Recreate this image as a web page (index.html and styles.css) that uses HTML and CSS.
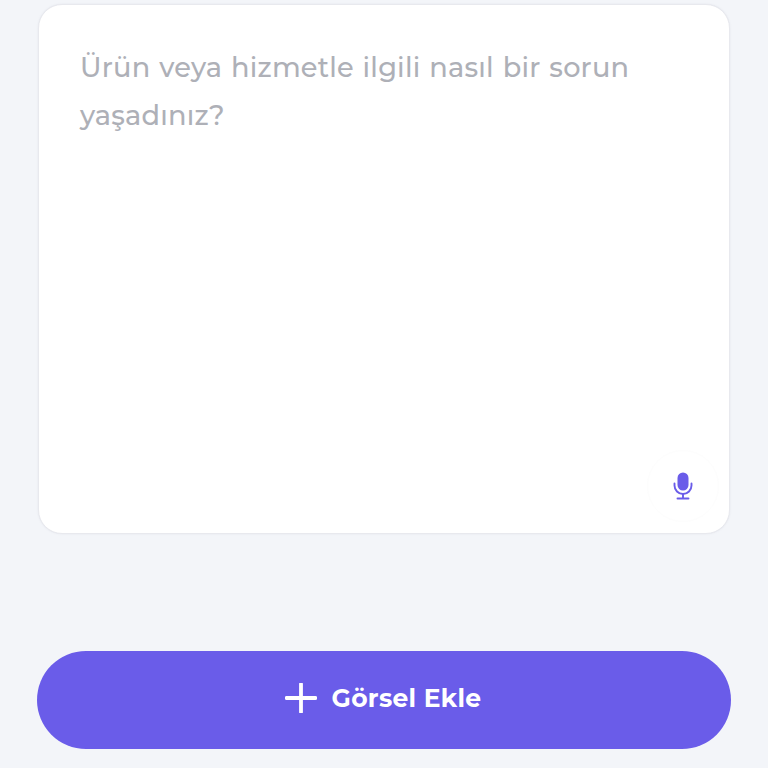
FILE: index.html

```html
<!DOCTYPE html>
<html lang="tr">
<head>
  <meta charset="UTF-8" />
  <meta name="viewport" content="width=device-width, initial-scale=1.0"/>
  <title>Görsel Ekle</title>
  <link rel="stylesheet" href="styles.css">
</head>
<body>
  <div class="page">
    <div class="complaint-box">
      <p class="placeholder">Ürün veya hizmetle ilgili nasıl bir sorun yaşadınız?</p>
      <button class="mic-btn" aria-label="Mikrofon">
        <svg width="22" height="28" viewBox="0 0 22 28">
          <rect x="5.500" y="0.500" width="11" height="18" rx="5.500" fill="#6a5ce9"/>
          <path d="M2.500 11.500v2a8.500 8.500 0 0 0 17 0v-2" fill="none" stroke="#6a5ce9" stroke-width="1.900" stroke-linecap="round"/>
          <path d="M11 22v4M5.500 26.500h11" fill="none" stroke="#6a5ce9" stroke-width="1.900" stroke-linecap="round"/>
        </svg>
      </button>
    </div>
    <button class="add-btn">
      <svg width="32" height="30" viewBox="0 0 32 30">
        <path d="M1.500 15h29M16 1v28" fill="none" stroke="#fff" stroke-width="3.800" stroke-linecap="round"/>
      </svg>
      <span>Görsel Ekle</span>
    </button>
  </div>
</body>
</html>
```

FILE: styles.css

```css
html, body {
  margin: 0;
  padding: 0;
}
body {
  background-color: #f3f5f9;
  font-family: "Montserrat", "Inter", "Noto Sans", sans-serif;
}
.page {
  width: 768px;
  height: 768px;
  box-sizing: border-box;
  padding: 4px 38px 0 38px;
  overflow: hidden;
}
.complaint-box {
  height: 530px;
  box-sizing: border-box;
  background-color: #fff;
  border: 1px solid #e8e9ee;
  border-radius: 24px;
  box-shadow: 0 0 2px rgba(120, 125, 145, 0.12);
  padding: 39px 41px 0 41px;
  position: relative;
}
.placeholder {
  margin: 0;
  font-size: 27.2px;
  font-weight: 500;
  line-height: 48px;
  color: #aeb0b7;
  letter-spacing: 0.2px;
  word-spacing: 1.300px;
}
.mic-btn {
  position: absolute;
  right: 10px;
  bottom: 11px;
  width: 72px;
  height: 72px;
  padding: 0;
  border: 1px solid #fdfdfd;
  border-radius: 50%;
  background-color: #fff;
  display: flex;
  align-items: center;
  justify-content: center;
}
.add-btn {
  margin: 117px 0 0 -1px;
  width: 694px;
  height: 98px;
  padding: 0 2px 4px 0;
  border: none;
  border-radius: 49px;
  background-color: #6a5ce9;
  color: #fff;
  font-family: inherit;
  font-size: 25px;
  font-weight: 700;
  letter-spacing: 0.3px;
  display: flex;
  align-items: center;
  justify-content: center;
  gap: 15px;
}
```
